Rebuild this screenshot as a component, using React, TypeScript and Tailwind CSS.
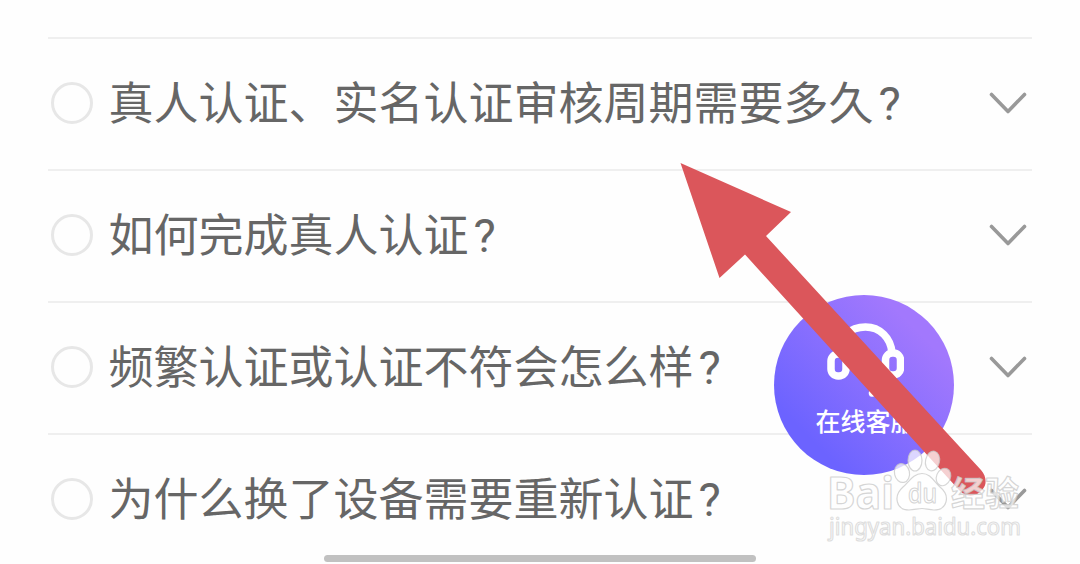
const questions = [
  "真人认证、实名认证审核周期需要多久",
  "如何完成真人认证",
  "频繁认证或认证不符会怎么样",
  "为什么换了设备需要重新认证",
];

function Chevron() {
  return (
    <svg className="h-6 w-10 shrink-0" viewBox="0 0 40 24" fill="none" stroke="#999999" strokeWidth="3.6" strokeLinecap="round" strokeLinejoin="round">
      <path d="M3.5 3.500 L20 20.500 L36.500 3.500" />
    </svg>
  );
}

function Question({ text }: { text: string }) {
  return (
    <li className="flex h-[132px] items-center border-t-2 border-[#efefef] pb-[3px]">
      <span className="ml-[3px] size-[42px] shrink-0 rounded-full border-[3px] border-[#e7e7e7]" />
      <span className="mb-[3px] ml-[15.5px] flex-1 whitespace-nowrap text-[45px] leading-[60px] text-[#666666]">
        {text}
        <span className="ml-[5px] font-[Roboto,sans-serif] text-[47px] leading-[1px]">?</span>
      </span>
      <span className="mr-1 flex">
        <Chevron />
      </span>
    </li>
  );
}

function SupportButton() {
  return (
    <button className="absolute left-[774px] top-[295px] flex size-[180px] flex-col items-center rounded-full bg-linear-to-tr from-[#6c63ff] from-20% to-[#a278fd] to-80% text-white">
      <svg className="mt-[26px] h-[78px] w-20" viewBox="0 0 80 78" fill="none" stroke="white" strokeWidth="7.500">
        <path d="M14 32 V30 C14 17 26 6 41.500 6 C56 6 67 17 68 32" />
        <rect x="7" y="33" width="15" height="22" rx="7" />
        <rect x="61.500" y="32" width="15" height="22" rx="7" />
        <path d="M68 56 C66 66 60 70 48 72.500" strokeWidth="6.500" strokeLinecap="round" />
      </svg>
      <span className="ml-[3px] mt-[3px] text-[25px] font-medium leading-9">在线客服</span>
    </button>
  );
}

function Arrow() {
  return (
    <svg className="pointer-events-none absolute left-0 top-0 h-[564px] w-[1080px]" viewBox="0 0 1080 564">
      <path fill="#db565b" d="M680.500 163 L791 212 L766 236 L981 470 C987 477 987 485 982 490 C976 497 966 498 959 490 L745 254.500 L719.500 278 Z" />
    </svg>
  );
}

function Watermark() {
  return (
    <svg
      className="pointer-events-none absolute left-[820px] top-[444px] h-[104px] w-[210px]"
      viewBox="820 444 210 104"
      fill="white"
      fillOpacity="0.72"
      stroke="#c8c8c8"
      strokeOpacity="0.75"
      strokeWidth="1.200"
      strokeLinejoin="round"
    >
      <text x="827" y="509" fontFamily="Noto Sans, sans-serif" fontSize="44" fontWeight="700" textLength="67" lengthAdjust="spacingAndGlyphs">Bai</text>
      <text x="951" y="506" fontFamily="Noto Sans CJK SC, sans-serif" fontSize="34" fontWeight="700" textLength="68" lengthAdjust="spacingAndGlyphs">经验</text>
      <ellipse cx="902" cy="473" rx="7.500" ry="9.500" transform="rotate(-12 902 473)" />
      <ellipse cx="915" cy="460.500" rx="7" ry="10.500" />
      <ellipse cx="932.500" cy="461" rx="7" ry="10" transform="rotate(12 932.500 461)" />
      <ellipse cx="943.500" cy="477" rx="7" ry="9" transform="rotate(22 943.500 477)" />
      <path d="M922 473.500 C931 473.500 934 482 940 487 C951 496 947 510 934 510 C929 510 926 508.500 922 508.500 C918 508.500 914 510 909 510 C896 510 893 496 903 487 C909 482 913 473.500 922 473.500 Z" />
      <text x="908" y="503" fontFamily="Noto Sans, sans-serif" fontSize="27" fontWeight="500" textLength="29" lengthAdjust="spacingAndGlyphs">du</text>
      <text x="829" y="535" fontFamily="Noto Sans, sans-serif" fontSize="23" fontWeight="400" textLength="192" lengthAdjust="spacingAndGlyphs" strokeOpacity="0.6">jingyan.baidu.com</text>
    </svg>
  );
}

export default function App() {
  return (
    <main className="relative h-[564px] w-[1080px] overflow-hidden bg-[#fefefe] pt-[37px] font-['Noto_Sans_CJK_SC',sans-serif]">
      <ul className="mx-12">
        {questions.map((text) => (
          <Question key={text} text={text} />
        ))}
      </ul>
      <div className="absolute bottom-[2px] left-1/2 h-[7px] w-[432px] -translate-x-1/2 rounded-full bg-[#c1c1c1]" />
      <SupportButton />
      <Arrow />
      <Watermark />
    </main>
  );
}
